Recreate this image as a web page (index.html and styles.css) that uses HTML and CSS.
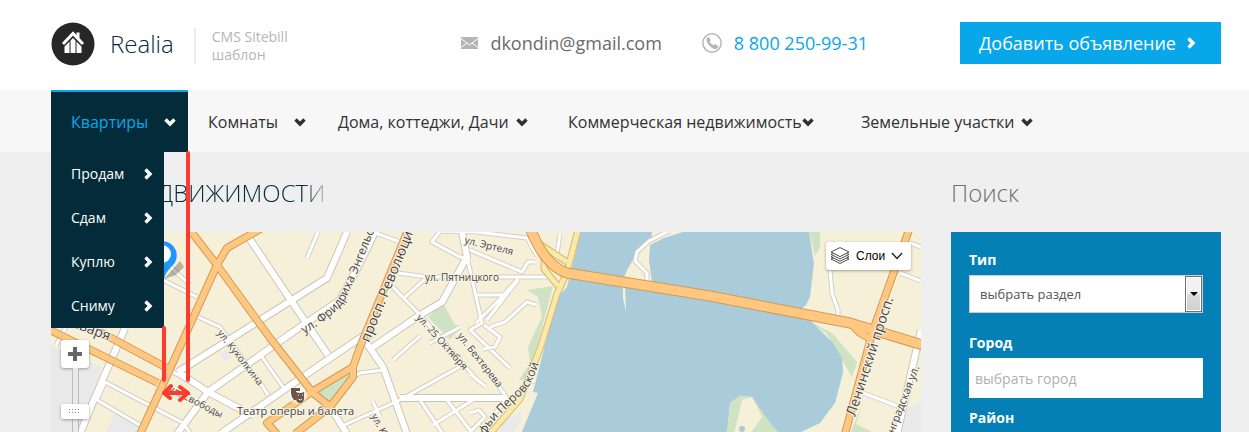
FILE: index.html
```html
<!DOCTYPE html>
<html lang="ru">
<head>
    <meta charset="UTF-8">
    <meta name="viewport" content="width=device-width, initial-scale=1.0">
    <title>Realia</title>
    <link rel="stylesheet" href="styles.css">
</head>
<body>
    <svg class="symbols" aria-hidden="true">
        <symbol id="chevron" viewBox="0 0 12 12">
            <path d="M1.5 3.5 6 8l4.500-4.500" fill="none" stroke="currentColor" stroke-width="3.400"/>
        </symbol>
    </svg>

    <header class="header">
        <a class="brand" href="#">
            <svg class="logo" viewBox="0 0 44 44" aria-hidden="true">
                <circle cx="22" cy="22" r="21.500" fill="#272727"/>
                <path d="M12 22 22 11.500 32 22" fill="none" stroke="#fff" stroke-width="3"/>
                <path d="M25.500 10.500h3v7l-3-3zM13.500 24.500l5-5V31h-5zM19.500 18.500l2.500-2.500 2.500 2.500V31h-5zM25.500 19.500l5 5V31h-5z" fill="#fff"/>
            </svg>
            <span class="brand-name">Realia</span>
            <span class="tagline">CMS Sitebill<br>шаблон</span>
        </a>
        <div class="contacts">
            <a class="email" href="mailto:dkondin@gmail.com">
                <svg width="17" height="12" viewBox="0 0 17 12" aria-hidden="true">
                    <path d="M0 0h17v12H0z" fill="#b5b5b5"/>
                    <path d="M0 1.500 8.500 8 17 1.500M0 10.500l6-4.500M17 10.500 11 6" fill="none" stroke="#fff"/>
                </svg>
                dkondin@gmail.com
            </a>
            <a class="phone" href="tel:88002509931">
                <svg width="20" height="20" viewBox="0 0 20 20" aria-hidden="true">
                    <circle cx="10" cy="10" r="9.200" fill="none" stroke="#b5b5b5" stroke-width="1.500"/>
                    <path d="M4.500 5.500 6.500 4l2.500 3-1.300 1.700c.8 1.500 2 2.700 3.600 3.600L13 11l3.500 2.300-1.500 2.500c-5 1.200-11-5.200-10.500-10.300z" fill="#b5b5b5"/>
                </svg>
                8 800 250-99-31
            </a>
        </div>
        <button class="add-button" type="button">Добавить объявление
            <svg class="arrow arrow-right" aria-hidden="true"><use href="#chevron"/></svg>
        </button>
    </header>

    <nav class="nav">
        <ul class="menu">
            <li class="menu-item">
                <a class="menu-link active" href="#">Квартиры <svg class="arrow" aria-hidden="true"><use href="#chevron"/></svg></a>
                <ul class="submenu">
                    <li><a href="#">Продам <svg class="arrow arrow-right" aria-hidden="true"><use href="#chevron"/></svg></a></li>
                    <li><a href="#">Сдам <svg class="arrow arrow-right" aria-hidden="true"><use href="#chevron"/></svg></a></li>
                    <li><a href="#">Куплю <svg class="arrow arrow-right" aria-hidden="true"><use href="#chevron"/></svg></a></li>
                    <li><a href="#">Сниму <svg class="arrow arrow-right" aria-hidden="true"><use href="#chevron"/></svg></a></li>
                </ul>
                <svg class="marker" width="40" height="260" viewBox="156 148 40 260" aria-hidden="true">
                    <path d="M188 153v227M164 328v52M165 393h22M171 386l-7 7 6 5M180 387l8 6-8 7" fill="none" stroke="#ff3b30" stroke-width="4" stroke-linecap="round" stroke-linejoin="round"/>
                </svg>
            </li>
            <li class="menu-item"><a class="menu-link" href="#">Комнаты <svg class="arrow" aria-hidden="true"><use href="#chevron"/></svg></a></li>
            <li class="menu-item"><a class="menu-link tight" href="#">Дома, коттеджи, Дачи <svg class="arrow" aria-hidden="true"><use href="#chevron"/></svg></a></li>
            <li class="menu-item"><a class="menu-link flush" href="#">Коммерческая недвижимость <svg class="arrow" aria-hidden="true"><use href="#chevron"/></svg></a></li>
            <li class="menu-item"><a class="menu-link tight" href="#">Земельные участки <svg class="arrow" aria-hidden="true"><use href="#chevron"/></svg></a></li>
        </ul>
    </nav>

    <main class="content">
        <section class="catalog">
            <h1 class="catalog-title">недвижимости</h1>
            <div class="map">
                <svg class="map-canvas" viewBox="51 232 870 200" preserveAspectRatio="xMinYMin slice">
                    <defs>
                        <path id="lanes" d="M105 382l78 41 8 11M97 400l46 27M97 400l8-18M173 372l67 38 14 7M262 357l21 30M198 317l22 10 43 60 5 8M197 297l-34-17M190 285l-25-23M353 377l7-4 23-3M340 427l60-27 63-35M393 360l27-24M393 287l27 28 57 65M398 273l29 4h120M405 297l20-18M373 232l30 11M307 258l11-26M480 232l-40-1-8 11 28 15 10 2M467 257l15 66-12 7 40 38M470 250l52 22 6-10h7M477 295h28M518 280l-31 40M490 327l15-5 22-20 10 3M518 279l-20 22-22 22M484 325l16 12-5 10-12 2M460 327l-30 16M470 347l37 51-17 22M470 413l9-3 6 7-15 15M420 400l23 34M447 400l26 34M433 425l40-25M373 402l7 15M838 316v-6l-6-17-2-23M900 273l21 8M910 243l11 4M863 393l40 15M647 283v-10l-12-12 2-9 12-11 20-10M521 390l5-7 8-2M470 374l15 12M560 234l-3 20M477 232l50 6 10 18M56 345l10-18"/>
                        <path id="streets" d="M125 328l-32 74-13 32M178 372l149-94 20-46M177 434l31-42 85-60 47-32 20-37 15-31M220 434l100-69 43-29 10-2M373 347l47-32 22-13 25-45-5-25M245 232l47 70 36 53M363 338l20 29 24 67M400 398h107M332 410l15 24M178 372l30 20 32 17M921 330l-24 104"/>
                        <path id="embankment" d="M578 230l-11 42-10 22-17 55-20 50-32 37M538 243l29 19M544 255v14l14 17"/>
                        <path id="avenues" d="M140 434l25-54 52-115 10-17 35-20M190 230l27 35 53 73 43 55 19 15M50 330l108 53M100 332l67 36M408 230l-48 117-7 20-43 26-43 30 10 11M353 367v10l-23 30-35 27M909 230l-36 100-28 104M850 323l10 10 13 7"/>
                        <path id="bridge" d="M530 228q15 38 37 45l143 23 140 27 73 22"/>
                        <path id="engels" d="M304 334q35-20 43-38 6-13 14-32l24-60"/>
                        <path id="perovskaya" d="M478 448q12-24 22-33l18-17q12-10 16-22 8-18 11-36"/>
                    </defs>

                    <!-- blocks -->
                    <path fill="#f6f0d9" d="M51 232h870v200H51z"/>
                    <path fill="#e9e9e9" d="M51 345l51 22-20 67H51zM921 402l-16 8-12 24h28zM503 420l18-8v8l-8 14h-14zM114 413l26 13-4 8h-30zM219 354l8-4 5 8-8 3z"/>
                    <!-- parks -->
                    <g fill="#d0e2c4">
                        <path d="M428 317l15-14 15 27-8 10zM350 372l2 8-24 25-10-13z"/>
                        <path d="M527 290l26-4-16 61-12 33h-6l11-17-2-16 14-30-4-20zM807 320l25 13 25 29-5 15-9-15-17-29zM809 232h11v16l-5 8zM863 402l-7 22 20 10h-26z"/>
                    </g>
                    <!-- water -->
                    <path fill="#a9cbda" d="M581 232l-14 55-10 11-24 94 5 1-17 41h206l3-31 10-7 12 1 10 15 11 15 7 7h17l23-11 15-20 8-30-1-15-9-15-20-20-13-13 6-5 4-8 4-34-3-18-2-13z"/>
                    <path fill="#f6f0d9" d="M652 232l-1 8-14 13-10 17-4 10v19l3 13-1-28 27-2-3-22 1-15 14-7 19-6v-2z"/>
                    <path fill="#d0e2c4" d="M727 434l3-31 10-7 12 1 10 15 11 15 7 7z"/>
                    <path fill="#f6f0d9" d="M742 400l10-3 10 20-12 17h-16z"/>
                    <circle cx="742" cy="429" r="3" fill="#a9cbda"/>

                    <!-- roads, outline first -->
                    <g fill="none" stroke-linejoin="round">
                        <use href="#lanes" stroke="#d3cfc3" stroke-width="5"/>
                        <use href="#streets" stroke="#c9c5ba" stroke-width="8"/>
                        <use href="#lanes" stroke="#fff" stroke-width="3"/>
                        <use href="#streets" stroke="#fff" stroke-width="6"/>
                        <use href="#embankment" stroke="#cdbb7c" stroke-width="7"/>
                        <use href="#embankment" stroke="#fbe9a5" stroke-width="5"/>
                        <use href="#avenues" stroke="#cf9c58" stroke-width="8"/>
                        <use href="#bridge" stroke="#cf9c58" stroke-width="11"/>
                        <use href="#avenues" stroke="#ffc77f" stroke-width="6"/>
                        <use href="#bridge" stroke="#ffc77f" stroke-width="9"/>
                    </g>

                    <!-- street names -->
                    <g class="street-names">
                        <text transform="translate(62 323) rotate(21)" font-size="14">Января</text>
                        <text transform="translate(168 391) rotate(27)">ул. Свободы</text>
                        <text transform="translate(217 333) rotate(52)">ул. Куколкина</text>
                        <text font-size="12"><textPath href="#engels">ул. Фридриха Энгельса</textPath></text>
                        <text transform="translate(369 343) rotate(-68)" font-size="14">просп. Революции</text>
                        <text x="425" y="281">ул. Пятницкого</text>
                        <text transform="translate(464 243) rotate(14)">ул. Эртеля</text>
                        <text transform="translate(416 318) rotate(48)">ул. 25 Октября</text>
                        <text transform="translate(457 336) rotate(52)">ул. Бехтерева</text>
                        <text font-size="12"><textPath href="#perovskaya">Софьи Перовской</textPath></text>
                        <text transform="translate(855 417) rotate(-72)" font-size="14">Ленинский просп.</text>
                        <text transform="translate(884 460) rotate(-69)" font-size="11">Ленинградская ул.</text>
                        <text transform="translate(371 416) rotate(62)">ул. К</text>
                        <text x="237" y="415" font-size="11">Театр оперы и балета</text>
                    </g>
                    <circle cx="298" cy="395" r="9" fill="#fff" opacity=".6"/>
                    <path fill="#6b5548" d="M291 388h9v3h-4v9h-2q-3-3-3-7zM296 392q4 2 8 0v6q0 5-4 5t-4-5z"/>
                    <path stroke="#fff" fill="none" d="M298 395h1M302 395h1M298.500 399q2 2 3.500 0"/>
                    <!-- office pin -->
                    <path fill="#000" opacity=".25" d="M164 279l16-18 4 6-8 8z"/>
                    <path fill="#1e98ff" d="M164 279q1-6 8-13a14 14 0 1 0-21-3q8 8 13 16z"/>
                    <circle cx="162" cy="254" r="9" fill="#fff"/>
                </svg>
                <div class="zoom">
                    <button class="zoom-in" type="button" aria-label="Приблизить">
                        <svg width="14" height="14" viewBox="0 0 14 14"><path d="M7 0v14M0 7h14" stroke="#666" stroke-width="4"/></svg>
                    </button>
                    <div class="zoom-track">
                        <div class="zoom-handle"></div>
                    </div>
                </div>
                <button class="layers" type="button">
                    <svg width="20" height="18" viewBox="0 0 20 18" fill="#fff" stroke="#4d4d4d" aria-hidden="true">
                        <path d="M10 7.500l9 4.500-9 4.500L1 12z"/><path d="M10 5.200l9 4.500-9 4.500-9-4.500z"/><path d="M10 2.900l9 4.500-9 4.500-9-4.500z"/><path d="M10 .6l9 4.500-9 4.500-9-4.500z"/>
                    </svg>
                    <span>Слои</span>
                    <svg width="12" height="8" viewBox="0 0 12 8" fill="none" stroke="#222" stroke-width="1.400" aria-hidden="true"><path d="M1 1l5 5.500L11 1"/></svg>
                </button>
            </div>
        </section>

        <aside class="search">
            <h2 class="search-title">Поиск</h2>
            <form class="search-form">
                <div class="field field-select">
                    <label for="type">Тип</label>
                    <div class="select-box">
                        <select id="type">
                            <option>выбрать раздел</option>
                        </select>
                        <span class="select-arrow"></span>
                    </div>
                </div>
                <div class="field">
                    <label for="city">Город</label>
                    <input id="city" type="text" placeholder="выбрать город">
                </div>
                <div class="district">Район</div>
            </form>
        </aside>
    </main>
</body>
</html>
```
FILE: styles.css
```css
* {
    box-sizing: border-box;
}
body {
    display: flex;
    flex-direction: column;
    min-height: 100vh;
    margin: 0;
    background: #efefef;
    color: #313131;
    font-family: "Open Sans", "Noto Sans", sans-serif;
    font-size: 14px;
    line-height: 20px;
}
a {
    color: inherit;
    text-decoration: none;
}
ul {
    margin: 0;
    padding: 0;
    list-style: none;
}
button,
input,
select {
    font-family: inherit;
}
.symbols {
    position: absolute;
    width: 0;
    height: 0;
}
.arrow {
    flex: none;
    width: 12px;
    height: 12px;
}
.arrow-right {
    transform: rotate(-90deg);
}

/* header */
.header {
    display: flex;
    align-items: center;
    height: 90px;
    padding: 0 28px 4px 51px;
    background: #fff;
}
.brand {
    display: flex;
    align-items: center;
    padding-top: 2px;
}
.logo {
    width: 44px;
    height: 44px;
}
.brand-name {
    margin: 0 20px 0 15px;
    color: #042b3a;
    font-size: 24px;
    font-weight: 300;
}
.tagline {
    margin-top: 4px;
    padding-left: 16px;
    border-left: 2px solid #ebebeb;
    color: #b5b5b5;
    line-height: 18px;
}
.contacts {
    display: flex;
    gap: 40px;
    margin: 0 92px 0 auto;
    font-size: 18px;
}
.email,
.phone {
    display: flex;
    align-items: center;
    gap: 12px;
}
.email {
    color: #6b6b6b;
}
.phone {
    color: #08a7ea;
}
.add-button {
    display: flex;
    align-items: center;
    justify-content: space-between;
    width: 261px;
    height: 42px;
    padding: 0 24px 0 19px;
    border: 0;
    background: #08a7ea;
    color: #fff;
    font-size: 18px;
    cursor: pointer;
}

/* navigation */
.nav {
    padding: 0 28px 0 51px;
    background: #f7f7f7;
}
.menu {
    display: grid;
    grid-template-columns: 137px 130px 230px 293px auto;
}
.menu-item {
    position: relative;
}
.menu-link {
    display: flex;
    align-items: center;
    gap: 16px;
    height: 62px;
    padding: 0 0 0 20px;
    border-top: 2px solid transparent;
    font-size: 16px;
    white-space: nowrap;
}
.menu-link.tight {
    gap: 7px;
}
.menu-link.flush {
    gap: 0;
}
.menu-link.active {
    border-color: #08a7ea;
    background: #042b3a;
    color: #08a7ea;
}
.menu-link.active .arrow {
    color: #fff;
}
.submenu {
    position: absolute;
    z-index: 2;
    top: 100%;
    left: 0;
    width: 113px;
    background: #042b3a;
    color: #fff;
}
.submenu a {
    display: flex;
    align-items: center;
    justify-content: space-between;
    height: 44px;
    padding: 0 10px 0 20px;
}
.marker {
    position: absolute;
    z-index: 3;
    top: 58px;
    left: 105px;
}

/* content */
.content {
    display: grid;
    flex: 1;
    grid-template-columns: 1fr 270px;
    gap: 30px;
    padding: 0 28px 0 51px;
}
.catalog,
.search {
    display: flex;
    flex-direction: column;
}
.catalog-title,
.search-title {
    margin: 0;
    padding: 26px 0 24px;
    font-size: 24px;
    font-weight: 300;
    line-height: 30px;
}
.catalog-title {
    align-self: flex-start;
    padding-left: 76px;
    background: linear-gradient(90deg, #042b3a 92%, #b5bfc3);
    background-clip: text;
    color: transparent;
    text-transform: uppercase;
}
.search-title {
    color: #707070;
}
.map {
    position: relative;
    flex: 1;
    overflow: hidden;
}
.map-canvas {
    position: absolute;
    width: 100%;
    height: 100%;
}
.street-names {
    fill: #444;
    stroke: #f9f5e6;
    stroke-width: 2px;
    stroke-linejoin: round;
    paint-order: stroke;
    font-size: 10px;
}
.zoom {
    position: absolute;
    top: 108px;
    bottom: 0;
    left: 10px;
    display: flex;
    flex-direction: column;
    align-items: center;
}
.zoom-in {
    display: flex;
    align-items: center;
    justify-content: center;
    width: 28px;
    height: 28px;
    padding: 0;
    border: 0;
    border-radius: 3px;
    background: #fff;
    box-shadow: 0 1px 3px rgba(0, 0, 0, .35);
}
.zoom-track {
    display: flex;
    flex: 1;
    justify-content: center;
    width: 7px;
    padding-top: 36px;
    border: solid #bbb;
    border-width: 0 1px;
    background: #e9e9e9;
}
.zoom-handle {
    flex: none;
    width: 28px;
    height: 15px;
    border: solid #fff;
    border-width: 5px 8px;
    border-radius: 3px;
    background: repeating-linear-gradient(90deg, transparent 0 1px, #fff 1px 3px), repeating-linear-gradient(#888 0 1px, #fff 1px 3px);
    box-shadow: 0 1px 3px rgba(0, 0, 0, .35);
}
.layers {
    position: absolute;
    top: 10px;
    right: 10px;
    display: flex;
    align-items: center;
    gap: 6px;
    width: 85px;
    height: 28px;
    padding: 0 4px;
    border: 0;
    border-radius: 3px;
    background: #fff;
    box-shadow: 0 1px 3px rgba(0, 0, 0, .35);
    color: #000;
    font-family: "Liberation Sans", Arial, sans-serif;
    font-size: 12px;
}
.layers svg {
    flex: none;
}

/* search form */
.search-form {
    flex: 1;
    padding: 18px 18px 0;
    background: #0580b6;
    color: #fff;
    font-weight: 700;
}
.field {
    margin-bottom: 10px;
}
.field-select {
    margin-bottom: 20px;
}
.field label {
    display: block;
    margin-bottom: 5px;
}
.field input,
.field select {
    display: block;
    width: 100%;
    margin: 0;
    border: 0;
    border-radius: 0;
    background: #fff;
}
.field input {
    height: 40px;
    padding: 0 6px;
    font-size: 14px;
}
.field input::placeholder {
    color: #b0b0b0;
}
.select-box {
    position: relative;
}
.field select {
    height: 38px;
    padding: 0 30px 0 10px;
    border: 1px solid #ccc;
    appearance: none;
    color: #555;
    font-size: 13px;
}
.select-arrow {
    position: absolute;
    top: 1px;
    right: 1px;
    bottom: 1px;
    display: flex;
    align-items: center;
    justify-content: center;
    width: 17px;
    border: 1px solid #707070;
    background: linear-gradient(#f2f2f2 50%, #dcdcdc 50%, #cfcfcf);
    box-shadow: inset 0 0 0 1px #fff;
    pointer-events: none;
}
.select-arrow::after {
    border: 4px solid transparent;
    border-top-color: #000;
    border-bottom: 0;
    content: "";
}
```
